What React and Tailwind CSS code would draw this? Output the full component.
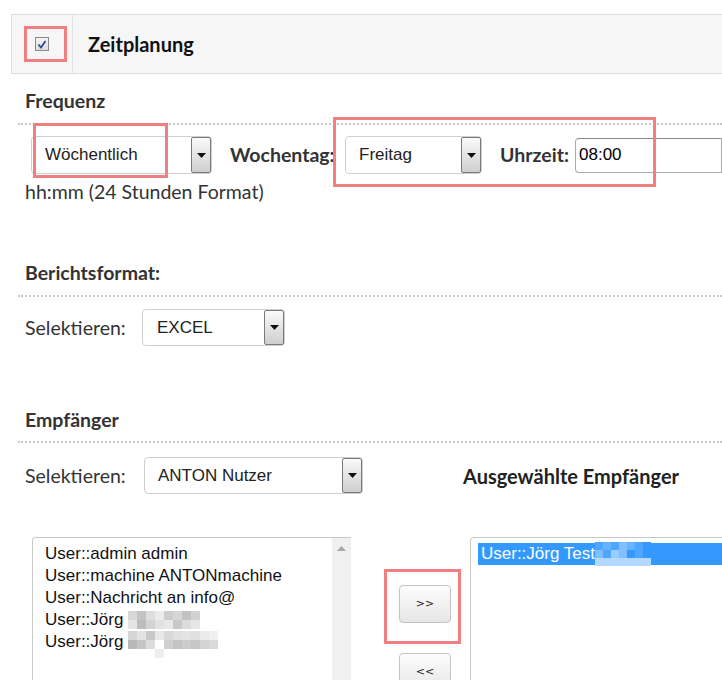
import React from "react";

const head = { fontFamily: "Lato, 'Open Sans', sans-serif" };
const ctl = { fontFamily: "'Liberation Sans', Arial, sans-serif" };

function Arrow() {
  return (
    <div className="flex h-full w-[20px] shrink-0 items-center justify-center rounded-[2px] border border-[#7a7a7a] bg-gradient-to-b from-[#fafafa] to-[#cfcfcf]">
      <svg width="9" height="5" viewBox="0 0 9 5"><path d="M0 0h9L4.5 5z" fill="#111" /></svg>
    </div>
  );
}

function Select({ w, label, h = "h-[38px]", pl = "pl-[13px]" }) {
  return (
    <div className={`flex ${h} ${w} items-stretch rounded-[4px] border border-[#cfcfcf] bg-white`} style={ctl}>
      <div className={`flex flex-1 items-center ${pl} text-[17px] text-[#222]`}>{label}</div>
      <Arrow />
    </div>
  );
}

function Pix({ rows, size = 9 }) {
  return (
    <span className="inline-flex flex-col align-top">
      {rows.map((r, i) => (
        <span key={i} className="flex">
          {r.map((c, j) => (
            <span key={j} style={{ width: size, height: size, background: c }} />
          ))}
        </span>
      ))}
    </span>
  );
}

export default function App() {
  return (
    <div className="relative h-[680px] w-[722px] overflow-hidden bg-white text-[#222]">
      {/* header */}
      <div className="ml-[11px] mt-[14px] flex h-[60px] border border-r-0 border-[#dedede] bg-[#f6f6f6]">
        <div className="flex w-[61px] items-center justify-center border-r border-[#e2e2e2]">
          <div className="flex h-[14px] w-[14px] items-center justify-center border border-[#8a8a8a] bg-gradient-to-b from-[#f4f4f4] to-[#dcdcdc]">
            <svg width="10" height="9" viewBox="0 0 10 9"><path d="M1.5 4.5l2.5 3 4.5-6.5" stroke="#2b4a9a" strokeWidth="1.8" fill="none" /></svg>
          </div>
        </div>
        <div className="flex items-center pl-[15px] text-[20px] font-bold text-[#111]" style={head}>Zeitplanung</div>
      </div>

      <div className="ml-[18px]">
        {/* Frequenz */}
        <div className="mt-[15px] pl-[7px] text-[19.5px] font-bold leading-[24px] text-[#333]" style={head}>Frequenz</div>
        <div className="mt-[10px] border-t-2 border-dotted border-[#c8c8c8]" />
        <div className="mt-[11px] flex items-center">
          <div className="ml-[13px]"><Select w="w-[181px]" label="Wöchentlich" /></div>
          <div className="ml-[18px] w-[104px] whitespace-nowrap text-[19.5px] font-bold text-[#333]" style={head}>Wochentag:</div>
          <div className="ml-[11px]"><Select w="w-[137px]" label="Freitag" /></div>
          <div className="ml-[18px] w-[70px] whitespace-nowrap text-[19.5px] font-bold text-[#333]" style={head}>Uhrzeit:</div>
          <div className="ml-[5px] flex h-[35px] flex-1 items-center rounded-l-[4px] border border-[#aaa] border-t-[#888] pl-[3px] text-[17px] text-black" style={ctl}>08:00</div>
        </div>
        <div className="mt-[6px] pl-[7px] text-[19.5px] leading-[24px] text-[#333]" style={head}>hh:mm (24 Stunden Format)</div>

        {/* Berichtsformat */}
        <div className="mt-[57px] pl-[7px] text-[19.5px] font-bold leading-[24px] text-[#333]" style={head}>Berichtsformat:</div>
        <div className="mt-[10px] border-t-2 border-dotted border-[#c8c8c8]" />
        <div className="mt-[12px] flex items-center">
          <div className="w-[109px] whitespace-nowrap pl-[7px] text-[19.5px] text-[#333]" style={head}>Selektieren:</div>
          <div className="ml-[15px]"><Select w="w-[143px]" label="EXCEL" h="h-[37px]" pl="pl-[14px]" /></div>
        </div>

        {/* Empfänger */}
        <div className="mt-[62px] pl-[7px] text-[19.5px] font-bold leading-[24px] text-[#333]" style={head}>Empfänger</div>
        <div className="mt-[9px] border-t-2 border-dotted border-[#c8c8c8]" />
        <div className="mt-[14px] flex items-center">
          <div className="w-[109px] whitespace-nowrap pl-[7px] text-[19.5px] text-[#333]" style={head}>Selektieren:</div>
          <div className="ml-[17px]"><Select w="w-[219px]" label="ANTON Nutzer" h="h-[37px]" /></div>
          <div className="ml-[100px] whitespace-nowrap text-[20px] font-bold text-[#222]" style={head}>Ausgewählte Empfänger</div>
        </div>
      </div>

      {/* lists */}
      <div className="mt-[43px] flex items-start">
        <div className="ml-[32px] flex h-[160px] w-[319px] rounded-tl-[4px] border border-r-0 border-[#c8c8c8]">
          <div className="flex-1 pl-[12px] pt-[5px] text-[17px] leading-[22px] text-[#111]" style={ctl}>
            <div>User::admin admin</div>
            <div>User::machine ANTONmachine</div>
            <div>User::Nachricht an info@</div>
            <div className="flex items-center">
              <span>User::Jörg&nbsp;</span>
              <Pix rows={[
                ["#d8d8d8", "#c4c4c4", "#dedede", "#ececec", "#cdcdcd", "#d6d6d6", "#c2c2c2", "#d2d2d2", "#fff"],
                ["#e6e4e6", "#bdbdbd", "#d3d3d3", "#e1e1e1", "#e8e8e8", "#c8c8c8", "#dcdcdc", "#e6e6e6", "#fff"],
              ]} />
            </div>
            <div className="flex items-start">
              <span>User::Jörg&nbsp;</span>
              <Pix rows={[
                ["#d6d6d6", "#e4e4e4", "#c8c8c8", "#e8e8e8", "#d8d8d8", "#e0e0e0", "#e4e4e4", "#e0e0e0", "#eaeaea", "#f0f0f0"],
                ["#b8b8b8", "#c6c6c6", "#dcdcdc", "#fff", "#d0d0d0", "#c4c4c4", "#cccccc", "#c6c6c6", "#d4d4d4", "#dadada"],
                ["#fff", "#fff", "#fff", "#eeeeee", "#fff", "#fff", "#fff", "#fff", "#fff", "#fff"],
              ]} />
            </div>
          </div>
          <div className="flex w-[19px] justify-center bg-[#f0f0f0] pt-[8px]">
            <svg width="9" height="5" viewBox="0 0 9 5"><path d="M0 5L4.5 0 9 5z" fill="#a8a8a8" /></svg>
          </div>
        </div>

        <div className="ml-[48px] flex w-[52px] flex-col gap-[30px] pt-[48px]">
          <button className="flex h-[38px] w-[52px] items-center justify-center rounded-[4px] border border-[#c4c4c4] bg-gradient-to-b from-[#fdfdfd] to-[#e6e6e6] text-[11px] text-[#222]" style={{ fontFamily: "'DejaVu Sans', Verdana, sans-serif" }}>&gt;&gt;</button>
          <button className="flex h-[38px] w-[52px] items-center justify-center rounded-[4px] border border-[#c4c4c4] bg-gradient-to-b from-[#fdfdfd] to-[#e6e6e6] text-[11px] text-[#222]" style={{ fontFamily: "'DejaVu Sans', Verdana, sans-serif" }}>&lt;&lt;</button>
        </div>

        <div className="ml-[19px] h-[160px] flex-1 rounded-tl-[4px] border border-r-0 border-[#c8c8c8] pl-[7px] pt-[5px]">
          <div className="flex h-[22px] items-center bg-[#3399ff] pl-[3px] text-[17px] text-white" style={ctl}>
            <span>User::Jörg Test</span>
            <Pix rows={[
              ["#4da6ff", "#66b3ff", "#4da6ff", "#80bfff", "#66b3ff", "#4da6ff", "#3399ff"],
              ["#80bfff", "#4da6ff", "#99ccff", "#80bfff", "#3399ff", "#4da6ff", "#3399ff"],
              ["#b3d9ff", "#b3d9ff", "#b3d9ff", "#b3d9ff", "#b3d9ff", "#b3d9ff", "#b3d9ff"],
            ]} size={8} />
          </div>
        </div>
      </div>

      {/* annotation highlights */}
      <div className="pointer-events-none absolute left-[24px] top-[26px] h-[36px] w-[43px] border-[3px] border-[#f08080]" />
      <div className="pointer-events-none absolute left-[33px] top-[123px] h-[55px] w-[135px] border-[3px] border-[#f08080]" />
      <div className="pointer-events-none absolute left-[333px] top-[117px] h-[70px] w-[323px] border-[3px] border-[#f08080]" />
      <div className="pointer-events-none absolute left-[384px] top-[569px] h-[75px] w-[77px] border-[3px] border-[#f08080]" />
    </div>
  );
}
